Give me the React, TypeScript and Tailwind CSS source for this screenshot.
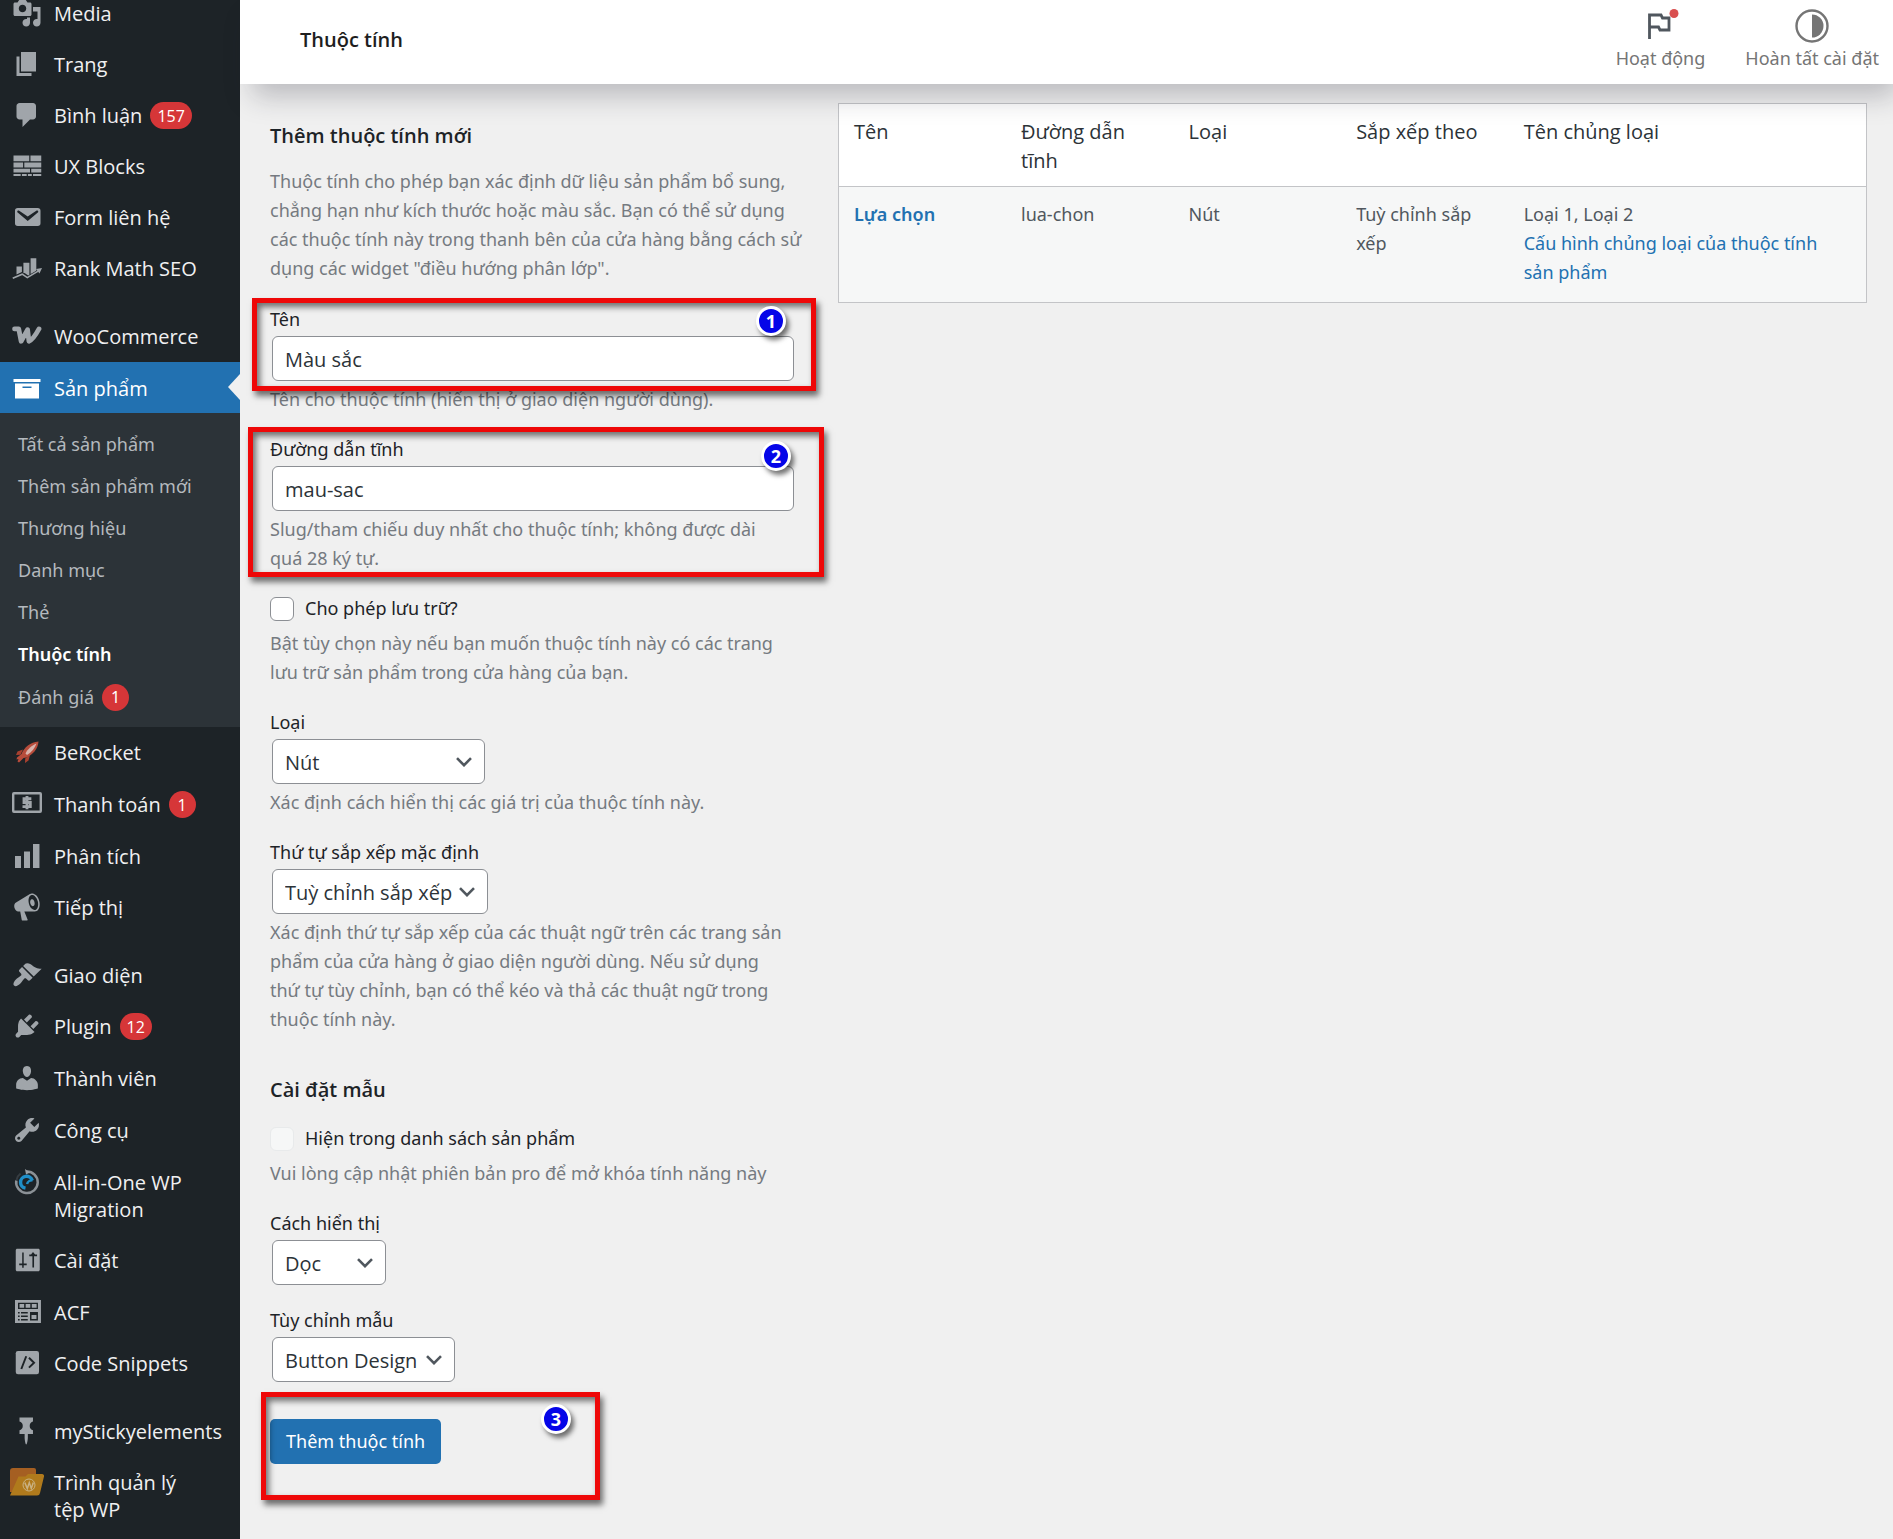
import type { ReactNode } from "react";

type IconProps = { children: ReactNode; className?: string };

function Glyph({ children, className = "" }: IconProps) {
  return (
    <svg viewBox="0 0 20 20" aria-hidden="true" className={`size-[30px] shrink-0 fill-current ${className}`}>
      {children}
    </svg>
  );
}

const icons: Record<string, ReactNode> = {
  media: (
    <Glyph>
      <path d="M13 11V4c0-.55-.45-1-1-1h-1.670L9 1H5L3.670 3H2c-.55 0-1 .45-1 1v7c0 .55.450 1 1 1h10c.55 0 1-.45 1-1zM7 4.500c1.380 0 2.500 1.120 2.500 2.500S8.380 9.500 7 9.500 4.500 8.380 4.500 7 5.620 4.500 7 4.500zM14 6h5v10.500c0 1.380-1.120 2.500-2.500 2.500S14 17.880 14 16.500s1.120-2.500 2.500-2.500c.17 0 .34.020.5.050V9h-3V6zM10 14.050V13h2v3.500c0 1.380-1.120 2.500-2.500 2.500S7 17.880 7 16.500 8.120 14 9.500 14c.17 0 .34.020.5.050z" />
    </Glyph>
  ),
  page: (
    <Glyph>
      <path d="M6 15V2h10v13H6zm-1 1h8v2H3V5h2v11z" />
    </Glyph>
  ),
  comments: (
    <Glyph>
      <path d="M5 2h9c1.100 0 2 .9 2 2v7c0 1.100-.9 2-2 2h-2l-5 5v-5H5c-1.100 0-2-.9-2-2V4c0-1.100.9-2 2-2z" />
    </Glyph>
  ),
  blocks: (
    <Glyph>
      <path d="M1 3h10.500v3.800H1zM12.300 3H19.500v3.800h-7.200zM1 7.700h6.400v3.300H1zM8.200 7.700h11.300v3.300H8.200zM1 11.900h11v2.500H1zM12.800 11.900h6.700v2.500h-6.700zM1 15.300h4.800v1.400H1zM6.600 15.300h3.200v1.400H6.600zM10.600 15.300h2.600v1.400h-2.600zM14 15.300h5.500v1.400H14z" />
    </Glyph>
  ),
  email: (
    <Glyph>
      <path d="M3.870 4h13.250C18.370 4 19 4.590 19 5.790v8.420c0 1.190-.63 1.790-1.880 1.790H3.870c-1.250 0-1.880-.6-1.880-1.790V5.790c0-1.200.63-1.790 1.880-1.790zm6.620 8.600l6.740-5.530c.24-.2.430-.66.130-1.070-.29-.41-.82-.42-1.170-.17l-5.700 3.860L4.800 5.830c-.35-.25-.88-.24-1.170.17-.3.41-.11.870.13 1.070z" />
    </Glyph>
  ),
  rank: (
    <Glyph>
      <path d="M3 9h3.600v3.700L3 14.300zM7.600 6.500h4v8l-.8.500-2.400-1.700-.8.200zM12.400 3.500h3.800v8.300l-3.800 2.200z" />
      <path d="M.5 16.800l6.300-2.700 3.400 2.300 7.200-4.300" fill="none" stroke="currentColor" strokeWidth="1.100" />
      <path d="M16 10.600l4-.6-1.700 3.700z" />
    </Glyph>
  ),
  woo: (
    <Glyph>
      <path
        d="M1.700 5.300h2.800l1.600 8.200 4.300-7.700.9 7.700c1.600-.6 4.200-3.600 6.700-8.200"
        fill="none"
        stroke="currentColor"
        strokeWidth="3.200"
        strokeLinejoin="round"
        strokeLinecap="round"
      />
    </Glyph>
  ),
  archive: (
    <Glyph>
      <path d="M19 4v2H1V4h18zM2 7h16v10H2V7zm11 3V9H7v1h6z" />
    </Glyph>
  ),
  rocket: (
    <svg viewBox="0 0 30 30" aria-hidden="true" className="size-[30px] shrink-0">
      <path d="M11 12.500l-5.500 2-1.500 3.500 4.500-.2zM18 18l-1.500 5.500-3.500 2.500.2-4.500z" fill="#a8402f" />
      <path d="M9.500 17C12 10.500 18.500 5 26.500 4.500 26 12 21 17.500 14.500 20.500l-3 .5-4.500 4.500-1.500-1 1-2.500-2 .5.500-2z" fill="#b74c3b" />
      <path d="M13.500 16.500C15.500 12 20 8.500 24.500 6.500c-1.500 4.500-5 9-9.500 11.500z" fill="#d9b3ac" />
    </svg>
  ),
  money: (
    <Glyph>
      <path
        d="M1.300 2h17.400A1.300 1.300 0 0 1 20 3.300v11.400A1.300 1.300 0 0 1 18.700 16H1.300A1.300 1.300 0 0 1 0 14.700V3.300A1.300 1.300 0 0 1 1.300 2zm.3 1.600v10.800h16.800V3.600z"
        fillRule="evenodd"
      />
      <path d="M12.900 6.500H8v2.500h4.200v2.700H7M10 4.700v8.800" fill="none" stroke="currentColor" strokeWidth="1.900" />
    </Glyph>
  ),
  chart: (
    <Glyph>
      <path d="M18.300 18V2h-4.300v16h4.300zM12 18V7H8v11h4zm-6 0v-8H2v8h4z" />
    </Glyph>
  ),
  megaphone: (
    <Glyph>
      <path
        fillRule="evenodd"
        d="M18.150 5.940c.46 1.620.380 3.220-.02 4.480-.42 1.280-1.260 2.180-2.300 2.480-.16.060-.26.060-.4.060-.06.020-.12.020-.18.020-.06.020-.14.020-.22.020h-6.800l2.220 5.500c.02.140-.06.260-.14.340-.08.100-.24.160-.34.160H6.950c-.1 0-.26-.06-.34-.16-.08-.08-.16-.2-.14-.34l-1-5.500H4.250l-.02-.02c-.5.060-1.080-.18-1.540-.62s-.88-1.080-1.060-1.880c-.24-.8-.2-1.560-.02-2.200.18-.62.580-1.080 1.060-1.300l.02-.02 9-5.400c.1-.06.180-.1.240-.16.060-.04.140-.08.240-.12.160-.08.280-.12.500-.18 1.040-.3 2.240.100 3.220.980s1.840 2.240 2.260 3.860zM15.570 11.920c.4-.1.740-.34 1.020-.7.580-.7.860-1.760.860-3.040 0-.64-.1-1.300-.28-1.980-.34-1.360-1.020-2.500-1.780-3.240s-1.680-1.100-2.460-.88c-.82.220-1.400.960-1.700 2-.32 1.040-.28 2.360.060 3.720.38 1.360 1 2.500 1.800 3.240.78.740 1.620 1.100 2.480.880z"
      />
      <path d="M13.030 4.840c.22-.04.420-.02.620.040.38.160.760.480 1.020 1s.42 1.200.420 1.780c0 .3-.04.560-.12.800-.18.480-.44.840-.86.940-.34.100-.8-.06-1.140-.4s-.64-.86-.78-1.500c-.18-.62-.12-1.240.02-1.720s.48-.84.820-.94z" />
    </Glyph>
  ),
  appearance: (
    <Glyph>
      <path d="M14.480 11.060L7.410 3.990l1.500-1.500c.5-.56 2.300-.47 3.510.320 1.210.800 1.430 1.280 2.910 2.100 1.180.640 2.450 1.260 4.450.850zm-.71.710L6.700 4.700 4.930 6.470c-.39.390-.39 1.020 0 1.410l1.060 1.060c.39.390.390 1.030 0 1.420-.6.600-1.430 1.110-2.210 1.690-.35.260-.7.530-1.010.840C1.430 14.230.4 16.080 1.400 17.070c.99 1 2.840-.03 4.180-1.360.31-.31.580-.66.850-1.020.57-.78 1.080-1.610 1.690-2.210.39-.39 1.020-.39 1.410 0l1.060 1.060c.39.390 1.020.390 1.410 0z" />
    </Glyph>
  ),
  plugins: (
    <Glyph>
      <path d="M13.110 4.360L9.870 7.600 8 5.730l3.240-3.240c.35-.34 1.050-.2 1.560.320.52.510.660 1.210.310 1.550zm-8 1.770l.91-1.120 9.010 9.010-1.190.840c-.71.710-2.630 1.160-3.820 1.160H6.140L4.900 17.260c-.59.590-1.540.590-2.120 0-.59-.58-.59-1.530 0-2.120l1.240-1.240v-3.880c0-1.130.4-3.190 1.090-3.890zm7.260 3.970l3.240-3.240c.34-.35 1.040-.21 1.550.310.52.510.660 1.210.310 1.550l-3.240 3.250z" />
    </Glyph>
  ),
  users: (
    <Glyph>
      <path d="M10 9.250c-2.270 0-2.730-3.440-2.730-3.440C7 4.020 7.820 2 9.970 2c2.160 0 2.980 2.020 2.710 3.810 0 0-.41 3.440-2.680 3.440zm0 2.570L12.720 10c2.390 0 4.520 2.330 4.520 4.530v2.490s-3.650 1.130-7.240 1.130c-3.650 0-7.240-1.130-7.240-1.130v-2.490c0-2.250 1.940-4.480 4.470-4.480z" />
    </Glyph>
  ),
  tools: (
    <Glyph>
      <path
        fillRule="evenodd"
        d="M16.680 9.770c-1.340 1.340-3.300 1.670-4.950.990l-5.410 6.520c-.99.990-2.590.990-3.580 0s-.99-2.590 0-3.570l6.520-5.420c-.68-1.650-.35-3.610.990-4.950 1.280-1.280 3.120-1.620 4.720-1.060l-2.890 2.890 2.820 2.820 2.860-2.870c.53 1.580.180 3.390-1.080 4.650zM3.810 16.210c.4.390 1.040.390 1.430 0 .4-.4.400-1.040 0-1.430-.39-.4-1.030-.4-1.430 0-.39.390-.39 1.030 0 1.430z"
      />
    </Glyph>
  ),
  migration: (
    <svg viewBox="0 0 30 30" aria-hidden="true" className="size-[30px] shrink-0" fill="none">
      <path d="M14.500 4.500A10.800 10.800 0 1 1 4.300 13.500" stroke="#8b9196" strokeWidth="2.500" />
      <path d="M13 2l5 3.500-4 2z" fill="#9aa0a5" />
      <path d="M4.500 13a10.800 10.800 0 0 1 4-6.500" stroke="#363c41" strokeWidth="2" />
      <path d="M13.500 21.200a6 6 0 1 1 6.800-7.700" stroke="#1f8fc9" strokeWidth="3.400" />
      <path d="M20.500 13.500a4.800 4.800 0 0 0-5.500 3.500" stroke="#1f8fc9" strokeWidth="2.400" />
    </svg>
  ),
  settings: (
    <Glyph>
      <path
        fillRule="evenodd"
        d="M18.500 16.500V3.500c0-.55-.45-1-1-1H3.500c-.55 0-1 .45-1 1v13c0 .55.450 1 1 1h14c.55 0 1-.45 1-1zM7.800 5v7.300h2v1.200h-2V15.200H6.800v-1.700h-2v-1.200h2V5zM14 4.600l1.400 1.700h1.300v1.200h-2V15h-1.100V7.500h-2.100V6.300h1.200z"
      />
    </Glyph>
  ),
  acf: (
    <Glyph>
      <path
        fillRule="evenodd"
        d="M2 2h17.300v15.300H2zM4 3.800v4.200h13.300V3.800zM5 4.700h3.100v2.400H5zM9.100 4.700h3.100v2.400H9.100zM13.200 4.700h3.200v2.400h-3.200zM4 10h1.100v1H4zM6 10h4.500v1H6zM4 12.300h1.100v1H4zM6 12.300h4.500v1H6zM4 14.600h1.100v1H4zM6 14.600h4.500v1H6zM12 10h5.300v5.600H12zM13 12v2.700h3.300V12z"
      />
    </Glyph>
  ),
  snippets: (
    <Glyph>
      <rect x="2.500" y="2" width="15.500" height="15.500" rx="1.500" />
      <path d="M9.500 5.500L6.200 14M11.300 6.500l3.400 3.300-3.400 3.300" fill="none" stroke="#1d2327" strokeWidth="1.300" />
    </Glyph>
  ),
  pin: (
    <Glyph>
      <path d="M5 3.610V1.040l8.990-.01-.01 2.580c-1.220.260-2.160 1.350-2.160 2.670v.5c.01 1.310.930 2.400 2.170 2.660l-.01 2.580h-3.410l-.01 2.570c0 .6-.47 4.410-1.060 4.410-.6 0-1.080-3.810-1.080-4.410v-2.560L5 12.020l.01-2.580c1.230-.25 2.150-1.350 2.150-2.660v-.5c0-1.310-.92-2.410-2.160-2.670z" />
    </Glyph>
  ),
  folder: (
    <svg viewBox="0 0 36 30" aria-hidden="true" className="h-[30px] w-9 shrink-0">
      <path d="M4 1h21a2 2 0 0 1 2 2v22H1V4a3 3 0 0 1 3-3z" fill="#a55f22" />
      <path d="M9.500 9.500h7l2.500-2.500h14a2 2 0 0 1 2 2.500l-4 16.500a3 3 0 0 1-3 2.500H1z" fill="#b07a1c" />
      <circle cx="20" cy="18" r="6" fill="none" stroke="#c9b283" strokeWidth="1" />
      <path d="M15.800 15.500l2.500 6 2-6 2 6 2-6" fill="none" stroke="#c9b283" strokeWidth="1.500" />
    </svg>
  ),
};

type Item = { icon: string; label: string; badge?: number; tall?: boolean };

const topItems: Item[] = [
  { icon: "media", label: "Media" },
  { icon: "page", label: "Trang" },
  { icon: "comments", label: "Bình luận", badge: 157 },
  { icon: "blocks", label: "UX Blocks" },
  { icon: "email", label: "Form liên hệ" },
  { icon: "rank", label: "Rank Math SEO" },
];

const shopItems: Item[] = [
  { icon: "rocket", label: "BeRocket", tall: true },
  { icon: "money", label: "Thanh toán", badge: 1, tall: true },
  { icon: "chart", label: "Phân tích" },
  { icon: "megaphone", label: "Tiếp thị" },
];

const adminItems: Item[] = [
  { icon: "appearance", label: "Giao diện" },
  { icon: "plugins", label: "Plugin", badge: 12, tall: true },
  { icon: "users", label: "Thành viên", tall: true },
  { icon: "tools", label: "Công cụ", tall: true },
  { icon: "migration", label: "All-in-One WP Migration" },
  { icon: "settings", label: "Cài đặt", tall: true },
  { icon: "acf", label: "ACF" },
  { icon: "snippets", label: "Code Snippets" },
];

const extraItems: Item[] = [
  { icon: "pin", label: "myStickyelements" },
  { icon: "folder", label: "Trình quản lý\ntệp WP" },
];

const subItems = ["Tất cả sản phẩm", "Thêm sản phẩm mới", "Thương hiệu", "Danh mục", "Thẻ", "Thuộc tính"];

function Badge({ value }: { value: number }) {
  return (
    <span className="inline-flex h-[27px] min-w-[27px] items-center justify-center rounded-full bg-[#d63638] px-[7px] text-[16px] leading-none text-white">
      {value}
    </span>
  );
}

function MenuItem({ item }: { item: Item }) {
  return (
    <li>
      <a
        href="#"
        className={`flex items-start pr-3 text-[#f0f0f1] ${item.tall ? "min-h-[52px]" : "min-h-[51px]"}`}
      >
        <span className="flex w-[54px] shrink-0 justify-center pt-[10px] text-[#a0a5aa]">{icons[item.icon]}</span>
        <span className="flex items-center gap-2 pt-3 pb-3 leading-[27px]">
          <span className="whitespace-pre-line">{item.label}</span>
          {item.badge !== undefined && <Badge value={item.badge} />}
        </span>
      </a>
    </li>
  );
}

function Menu({ items }: { items: Item[] }) {
  return (
    <ul>
      {items.map((item) => (
        <MenuItem key={item.label} item={item} />
      ))}
    </ul>
  );
}

function Sidebar() {
  return (
    <nav className="w-60 shrink-0 overflow-hidden bg-[#1d2327] font-['Open_Sans',sans-serif] text-[20px]">
      <div className="-mt-3 flex flex-col gap-[17px]">
        <Menu items={topItems} />
        <div>
          <Menu items={[{ icon: "woo", label: "WooCommerce" }]} />
          <a href="#" className="relative flex h-[51px] items-center bg-[#2271b1] text-white">
            <span className="flex w-[54px] shrink-0 justify-center">{icons.archive}</span>
            <span className="pt-0.5">Sản phẩm</span>
            <span className="absolute top-3 right-0 border-y-[13px] border-r-[12px] border-y-transparent border-r-[#f0f0f1]" />
          </a>
          <ul className="bg-[#2c3338] pt-[10px] pb-2 pl-[18px] font-['Noto_Sans',sans-serif] text-[18px] text-[#b4b9be]">
            {subItems.map((label) => (
              <li key={label}>
                <a
                  href="#"
                  className={`flex h-[42px] items-center ${label === "Thuộc tính" ? "font-semibold text-white" : ""}`}
                >
                  {label}
                </a>
              </li>
            ))}
            <li>
              <a href="#" className="flex h-11 items-center gap-2">
                Đánh giá <Badge value={1} />
              </a>
            </li>
          </ul>
          <Menu items={shopItems} />
        </div>
        <Menu items={adminItems} />
        <Menu items={extraItems} />
      </div>
    </nav>
  );
}

function TopBar() {
  return (
    <header className="relative z-10 flex h-21 items-start justify-between bg-white pr-[14px] pl-15 shadow-[8px_16px_28px_-4px_rgba(30,30,45,0.26)]">
      <h1 className="pt-[26px] font-['Open_Sans',sans-serif] text-[20px] leading-[27px] font-semibold text-[#1e1e1e]">
        Thuộc tính
      </h1>
      <div className="flex gap-10 pt-[9px] text-[18px] leading-[30px] text-[#757575]">
        <button type="button" className="flex flex-col items-center">
          <svg viewBox="0 0 34 34" aria-hidden="true" className="size-[34px] overflow-visible" fill="none">
            <path d="M6.500 30V6H18l1.500 3h6.500v12H17l-1.500-3h-9" stroke="#50575e" strokeWidth="2.800" />
            <circle cx="31" cy="4.500" r="4.500" fill="#d94f4f" />
          </svg>
          Hoạt động
        </button>
        <button type="button" className="flex flex-col items-center">
          <svg viewBox="0 0 34 34" aria-hidden="true" className="size-[34px]">
            <circle cx="17" cy="17" r="15.500" fill="none" stroke="#757575" strokeWidth="2.400" />
            <path d="M17 5.500a11.500 11.500 0 0 1 0 23z" fill="#757575" />
          </svg>
          Hoàn tất cài đặt
        </button>
      </div>
    </header>
  );
}

function Marker({ n, className }: { n: number; className: string }) {
  return (
    <span
      className={`absolute z-20 flex size-[30px] items-center justify-center rounded-full border-3 border-white bg-[#0505e8] text-[18px] leading-none font-bold text-white shadow-[3px_4px_5px_rgba(0,0,0,0.55)] ${className}`}
    >
      {n}
    </span>
  );
}

function Frame({ className }: { className: string }) {
  return (
    <span
      aria-hidden="true"
      className={`pointer-events-none absolute z-10 border-5 border-[#ee0808] shadow-[3px_5px_6px_rgba(0,0,0,0.55),inset_3px_4px_6px_rgba(0,0,0,0.55)] ${className}`}
    />
  );
}

function Hint({ children }: { children: ReactNode }) {
  return <p className="mt-1 max-w-[520px] text-[#757a80]">{children}</p>;
}

function TextField({ id, label, value, hint }: { id: string; label: string; value: string; hint: string }) {
  return (
    <>
      <label htmlFor={id} className="block">
        {label}
      </label>
      <input
        id={id}
        type="text"
        defaultValue={value}
        className="mt-0.5 ml-0.5 block h-[45px] w-full max-w-[522px] rounded-[6px] border border-[#8c8f94] bg-white px-3 pt-0.5 font-['Open_Sans',sans-serif] text-[20px] text-[#2c3338]"
      />
      <Hint>{hint}</Hint>
    </>
  );
}

function SelectField({
  id,
  label,
  value,
  width,
  hint,
}: {
  id: string;
  label: string;
  value: string;
  width: string;
  hint?: string;
}) {
  return (
    <div className="mt-[21px]">
      <label htmlFor={id} className="block">
        {label}
      </label>
      <div className={`relative mt-0.5 ml-0.5 ${width}`}>
        <select
          id={id}
          defaultValue={value}
          className="block h-[45px] w-full appearance-none rounded-[6px] border border-[#8c8f94] bg-white pt-0.5 pl-3 font-['Open_Sans',sans-serif] text-[20px] text-[#2c3338]"
        >
          <option>{value}</option>
        </select>
        <svg
          viewBox="0 0 16 10"
          aria-hidden="true"
          className="pointer-events-none absolute top-[18px] right-[13px] h-[10px] w-4"
          fill="none"
        >
          <path d="M1 1.200l7 7 7-7" stroke="#50575e" strokeWidth="2.600" />
        </svg>
      </div>
      {hint && <Hint>{hint}</Hint>}
    </div>
  );
}

function CheckField({ id, label, hint, disabled }: { id: string; label: string; hint: string; disabled?: boolean }) {
  return (
    <>
      <div className="flex items-center gap-[11px]">
        <input
          id={id}
          type="checkbox"
          disabled={disabled}
          className="size-6 appearance-none rounded-[6px] border border-[#8c8f94] bg-white disabled:border-[#e8eaeb] disabled:bg-[#f6f7f7]"
        />
        <label htmlFor={id}>{label}</label>
      </div>
      <div className="pt-0.5">
        <Hint>{hint}</Hint>
      </div>
    </>
  );
}

function AttributeForm() {
  return (
    <form className="w-[35%] min-w-[540px] shrink-0 pt-[37px] text-[18px] leading-[29px] text-[#1d2327]">
      <h2 className="font-['Open_Sans',sans-serif] text-[20px] font-semibold">Thêm thuộc tính mới</h2>
      <p className="mt-[17px] max-w-[545px] text-[#757a80]">
        Thuộc tính cho phép bạn xác định dữ liệu sản phẩm bổ sung, chẳng hạn như kích thước hoặc màu sắc. Bạn có thể sử
        dụng các thuộc tính này trong thanh bên của cửa hàng bằng cách sử dụng các widget "điều hướng phân lớp".
      </p>

      <div className="relative mt-[22px]">
        <TextField
          id="name"
          label="Tên"
          value="Màu sắc"
          hint="Tên cho thuộc tính (hiển thị ở giao diện người dùng)."
        />
        <Frame className="-top-[7px] -left-[18px] h-[93px] w-[564px]" />
        <Marker n={1} className="top-px left-[486px]" />
      </div>

      <div className="relative mt-[21px]">
        <TextField
          id="slug"
          label="Đường dẫn tĩnh"
          value="mau-sac"
          hint="Slug/tham chiếu duy nhất cho thuộc tính; không được dài quá 28 ký tự."
        />
        <Frame className="-top-2 -left-[22px] h-[150px] w-[576px]" />
        <Marker n={2} className="top-1.5 left-[491px]" />
      </div>

      <div className="mt-[21px]">
        <CheckField
          id="archive"
          label="Cho phép lưu trữ?"
          hint="Bật tùy chọn này nếu bạn muốn thuộc tính này có các trang lưu trữ sản phẩm trong cửa hàng của bạn."
        />
      </div>

      <SelectField
        id="type"
        label="Loại"
        value="Nút"
        width="w-[213px]"
        hint="Xác định cách hiển thị các giá trị của thuộc tính này."
      />
      <SelectField
        id="order"
        label="Thứ tự sắp xếp mặc định"
        value="Tuỳ chỉnh sắp xếp"
        width="w-[216px]"
        hint="Xác định thứ tự sắp xếp của các thuật ngữ trên các trang sản phẩm của cửa hàng ở giao diện người dùng. Nếu sử dụng thứ tự tùy chỉnh, bạn có thể kéo và thả các thuật ngữ trong thuộc tính này."
      />

      <h2 className="mt-[41px] mb-5 font-['Open_Sans',sans-serif] text-[20px] font-semibold">Cài đặt mẫu</h2>
      <CheckField
        id="catalog"
        label="Hiện trong danh sách sản phẩm"
        hint="Vui lòng cập nhật phiên bản pro để mở khóa tính năng này"
        disabled
      />
      <SelectField id="display" label="Cách hiển thị" value="Dọc" width="w-[114px]" />
      <SelectField id="template" label="Tùy chỉnh mẫu" value="Button Design" width="w-[183px]" />

      <div className="relative mt-[37px]">
        <button type="button" className="h-[45px] rounded-[5px] bg-[#2271b1] px-4 text-white">
          Thêm thuộc tính
        </button>
        <Frame className="-top-[27px] -left-[9px] h-[108px] w-[339px]" />
        <Marker n={3} className="-top-[15px] left-[271px]" />
      </div>
    </form>
  );
}

function AttributeTable() {
  return (
    <div className="min-w-0 flex-1 pt-[19px]">
      <table className="w-full table-fixed border-collapse border border-[#c3c4c7] bg-white text-left text-[18px] leading-[29px] text-[#50575e]">
        <colgroup>
          <col className="w-[16.3%]" />
          <col className="w-[16.3%]" />
          <col className="w-[16.3%]" />
          <col className="w-[16.3%]" />
          <col />
        </colgroup>
        <thead>
          <tr className="border-b border-[#c3c4c7] align-top font-['Open_Sans',sans-serif] text-[20px] text-[#2c3338]">
            {["Tên", "Đường dẫn tĩnh", "Loại", "Sắp xếp theo", "Tên chủng loại"].map((heading) => (
              <th key={heading} scope="col" className="px-[15px] pt-[13px] pb-[11px] font-normal">
                {heading}
              </th>
            ))}
          </tr>
        </thead>
        <tbody>
          <tr className="bg-[#f6f7f7] align-top">
            <td className="px-[15px] pt-[13px] pb-[15px]">
              <a href="#" className="font-semibold text-[#2271b1]">
                Lựa chọn
              </a>
            </td>
            <td className="px-[15px] pt-[13px] pb-[15px]">lua-chon</td>
            <td className="px-[15px] pt-[13px] pb-[15px]">Nút</td>
            <td className="px-[15px] pt-[13px] pb-[15px]">Tuỳ chỉnh sắp xếp</td>
            <td className="px-[15px] pt-[13px] pb-[15px]">
              Loại 1, Loại 2
              <br />
              <a href="#" className="text-[#2271b1]">
                Cấu hình chủng loại của thuộc tính sản phẩm
              </a>
            </td>
          </tr>
        </tbody>
      </table>
    </div>
  );
}

export default function App() {
  return (
    <div className="flex min-h-screen bg-[#f0f0f0] font-['Noto_Sans',sans-serif]">
      <Sidebar />
      <div className="min-w-0 flex-1">
        <TopBar />
        <main className="flex gap-[9px] pr-[26px] pl-[30px]">
          <AttributeForm />
          <AttributeTable />
        </main>
      </div>
    </div>
  );
}
